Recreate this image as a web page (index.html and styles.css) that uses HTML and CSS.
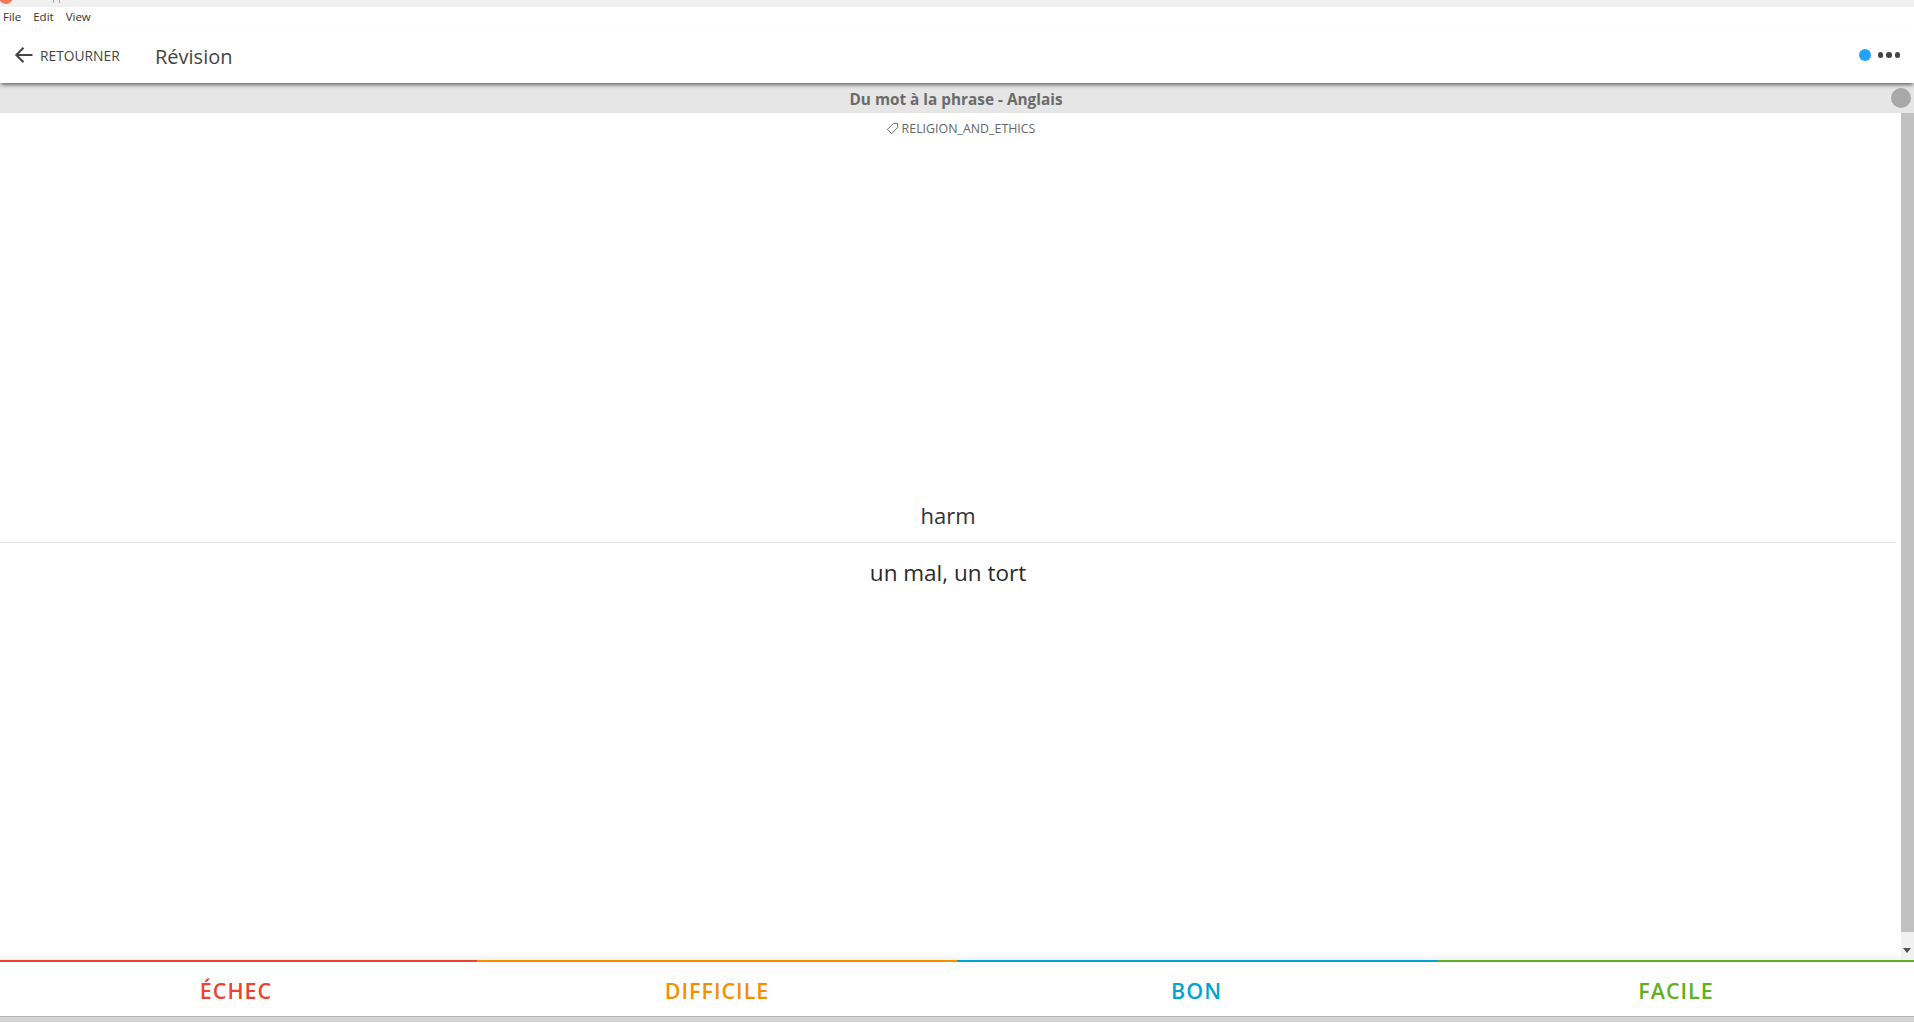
FILE: index.html
```html
<!DOCTYPE html>
<html lang="fr">
<head>
<meta charset="utf-8">
<title>Révision</title>
<link rel="stylesheet" href="styles.css">
</head>
<body>
<div class="chrome"><span class="app-dot"></span><span class="app-tick"></span><span class="app-tick second"></span></div>
<nav class="menubar"><span>File</span><span>Edit</span><span>View</span></nav>
<header class="toolbar">
  <div class="back">
    <svg class="back-icon" viewBox="0 0 20 18" width="20" height="18"><path d="M18.5 9H2.5M9.5 1.8 2.3 9l7.2 7.2" fill="none" stroke="#444" stroke-width="2"/></svg>
    <span>RETOURNER</span>
  </div>
  <h1 class="title">Révision</h1>
  <div class="status">
    <span class="status-dot"></span>
    <span class="more"><i></i><i></i><i></i></span>
  </div>
</header>
<div class="deck">Du mot à la phrase - Anglais<span class="deck-circle"></span></div>
<div class="body-row">
  <main class="card">
    <div class="tag">
      <svg viewBox="0 0 14 14" width="13" height="13"><path d="M8 1.5h4.5V6L6 12.5 1.5 8z M10.4 3.6h.01" fill="none" stroke="#666" stroke-width="1"/></svg>
      <span>RELIGION_AND_ETHICS</span>
    </div>
    <div class="question">harm</div>
    <div class="answer">un mal, un tort</div>
  </main>
  <div class="scrollbar"><div class="thumb"></div><div class="arrow"></div></div>
</div>
<footer class="actions">
  <button class="action fail">ÉCHEC</button>
  <button class="action hard">DIFFICILE</button>
  <button class="action good">BON</button>
  <button class="action easy">FACILE</button>
</footer>
<div class="bottom"></div>
</body>
</html>
```
FILE: styles.css
```css
* { box-sizing: border-box; }
html, body { margin: 0; height: 100%; overflow: hidden; }
body {
  display: flex; flex-direction: column; height: 1022px;
  font-family: "Open Sans", "Noto Sans", sans-serif; background: #fff; color: #222;
}
.chrome { height: 7px; background: #f0f0f0; position: relative; overflow: hidden; flex: none; }
.app-dot { position: absolute; left: -1px; top: -10px; width: 14px; height: 14px; border-radius: 50%; background: #f9765f; }
.app-tick { position: absolute; left: 53px; top: 0; width: 1px; height: 3px; background: #aaa; }
.app-tick.second { left: 59px; }
.menubar { height: 20px; flex: none; display: flex; gap: 12px; padding: 0 0 2px 3px; align-items: center; font-size: 11.5px; color: #333; }
.toolbar {
  height: 56px; flex: none; display: flex; align-items: center; position: relative; z-index: 2;
  box-shadow: 0 3px 4px -1px rgba(0,0,0,.55); background: #fff;
}
.back { display: flex; align-items: center; margin-left: 14px; gap: 6px; font-size: 13.8px; color: #444; width: 141px; }
.back-icon { flex: none; }
.title { margin: 0; font-size: 20px; font-weight: 400; color: #444; padding-top: 2px; }
.status { margin-left: auto; display: flex; align-items: center; gap: 7px; padding-right: 14px; }
.status-dot { width: 12px; height: 12px; border-radius: 50%; background: #22a2ff; }
.more { display: flex; gap: 3px; }
.more i { width: 5.5px; height: 5.5px; border-radius: 50%; background: #444; }
.deck {
  height: 30px; flex: none; background: #e6e6e6; position: relative; text-align: center;
  font-size: 15.35px; font-weight: 700; line-height: 32px; padding-right: 2px; color: #6b6b6b;
}
.deck-circle { position: absolute; right: 3px; top: 5px; width: 20px; height: 20px; border-radius: 50%; background: #a8a8a8; }
.body-row { flex: 1; display: flex; min-height: 0; }
.card { flex: 1; position: relative; padding-right: 5px; background: linear-gradient(#fff 99%, #f4f4f4); }
.tag { display: flex; justify-content: center; align-items: center; gap: 3px; height: 30px; padding-left: 25px; font-size: 12.4px; color: #666; }
.question {
  margin-top: 348px; height: 52px; display: flex; align-items: center; justify-content: center;
  padding-bottom: 4px; font-size: 22px; border-bottom: 1px solid #e4e4e4; color: #333; line-height: 1;
}
.answer { text-align: center; font-size: 22.5px; line-height: 1; padding-top: 19px; color: #2a2a2a; }
.scrollbar { width: 13px; flex: none; background: #f1f1f1; display: flex; flex-direction: column; position: relative; }
.thumb { height: 819px; background: #c1c1c1; }
.arrow { position: absolute; right: 3px; bottom: 7px; border: 4px solid transparent; border-top: 5px solid #505050; border-bottom: 0; }
.actions { height: 56px; flex: none; display: grid; grid-template-columns: 477px 480px 481px 476px; background: #fff; }
.action {
  border: 0; border-top: 2px solid; background: #fff; font: 600 21.5px "Open Sans", sans-serif;
  letter-spacing: 1px; padding: 2px 0 0;
}
.fail { color: #ea4430; border-color: #ea4430; padding-right: 5px; }
.hard { color: #f58f00; border-color: #f58f00; }
.good { color: #00a5d0; border-color: #00a5d0; padding-right: 2px; }
.easy { color: #63ae24; border-color: #63ae24; }
.bottom { height: 6px; flex: none; background: #d6d6d6; border-top: 1px solid #b4b4b4; }
```
